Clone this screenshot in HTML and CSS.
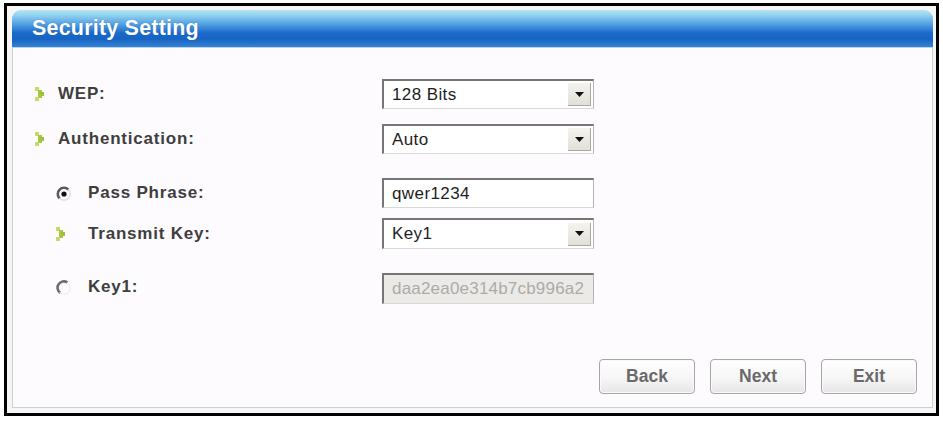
FILE: index.html
```html
<!DOCTYPE html>
<html>
<head>
<meta charset="utf-8">
<link rel="stylesheet" href="styles.css">
</head>
<body>
<div class="frame">
  <div class="panel">
    <div class="header">Security Setting</div>
    <div class="form">
      <div class="row r1">
        <div class="label">
          <span class="icon"><svg width="10" height="14" viewBox="0 0 10 14"><rect x="0" y="0" width="4" height="4" fill="#c4dc64"/><rect x="3" y="3" width="4" height="4" fill="#a6c840"/><rect x="5" y="5" width="4" height="4" fill="#9cc038"/><rect x="3" y="7" width="4" height="4" fill="#a6c840"/><rect x="0" y="10" width="4" height="4" fill="#c4dc64"/></svg></span>
          <span class="text">WEP:</span>
        </div>
        <div class="control select"><span class="value">128 Bits</span><span class="drop"><svg width="9" height="5" viewBox="0 0 9 5"><path d="M0 0H9L4.5 5Z" fill="#111"/></svg></span></div>
      </div>
      <div class="row r2">
        <div class="label">
          <span class="icon"><svg width="10" height="14" viewBox="0 0 10 14"><rect x="0" y="0" width="4" height="4" fill="#c4dc64"/><rect x="3" y="3" width="4" height="4" fill="#a6c840"/><rect x="5" y="5" width="4" height="4" fill="#9cc038"/><rect x="3" y="7" width="4" height="4" fill="#a6c840"/><rect x="0" y="10" width="4" height="4" fill="#c4dc64"/></svg></span>
          <span class="text">Authentication:</span>
        </div>
        <div class="control select"><span class="value">Auto</span><span class="drop"><svg width="9" height="5" viewBox="0 0 9 5"><path d="M0 0H9L4.5 5Z" fill="#111"/></svg></span></div>
      </div>
      <div class="row r3 sub">
        <div class="label">
          <span class="icon"><svg width="15" height="15" viewBox="0 0 15 15"><path d="M3.6 12.4A6 6 0 0 1 12.4 3.6" fill="none" stroke="#5a5a5a" stroke-width="2.6"/><path d="M12.4 3.6A6 6 0 0 1 3.6 12.4" fill="none" stroke="#e2e2e2" stroke-width="1.5"/><circle cx="8" cy="8" r="2.6" fill="#111"/></svg></span>
          <span class="text">Pass Phrase:</span>
        </div>
        <div class="control input"><span class="value">qwer1234</span></div>
      </div>
      <div class="row r4 sub">
        <div class="label">
          <span class="icon"><svg width="10" height="14" viewBox="0 0 10 14"><rect x="0" y="0" width="4" height="4" fill="#c4dc64"/><rect x="3" y="3" width="4" height="4" fill="#a6c840"/><rect x="5" y="5" width="4" height="4" fill="#9cc038"/><rect x="3" y="7" width="4" height="4" fill="#a6c840"/><rect x="0" y="10" width="4" height="4" fill="#c4dc64"/></svg></span>
          <span class="text">Transmit Key:</span>
        </div>
        <div class="control select"><span class="value">Key1</span><span class="drop"><svg width="9" height="5" viewBox="0 0 9 5"><path d="M0 0H9L4.5 5Z" fill="#111"/></svg></span></div>
      </div>
      <div class="row r5 sub">
        <div class="label">
          <span class="icon"><svg width="15" height="15" viewBox="0 0 15 15"><path d="M4.4 13A6 6 0 0 1 11.4 2.4" fill="none" stroke="#6e6e6e" stroke-width="2.6"/><path d="M12.4 3.6A6 6 0 0 1 3.6 12.4" fill="none" stroke="#ececec" stroke-width="1.2"/></svg></span>
          <span class="text">Key1:</span>
        </div>
        <div class="control input disabled"><span class="value">daa2ea0e314b7cb996a2</span></div>
      </div>
    </div>
    <div class="buttons">
      <div class="btn">Back</div>
      <div class="btn">Next</div>
      <div class="btn">Exit</div>
    </div>
  </div>
</div>
</body>
</html>
```
FILE: styles.css
```css
html, body {
  margin: 0;
  padding: 0;
  background: #ffffff;
}
body {
  font-family: "Liberation Sans", Arial, sans-serif;
}
.frame {
  margin: 3px 0 0 4px;
  width: 935px;
  height: 413px;
  box-sizing: border-box;
  border: 3px solid #000;
  padding: 4px 3px 5px 5px;
  background: #f7f6f7;
}
.panel {
  width: 921px;
  height: 398px;
  box-sizing: border-box;
  border: 1px solid #cfcfd2;
  border-top: none;
  border-radius: 9px 9px 0 0;
  background: #fdfbfd;
  display: flex;
  flex-direction: column;
}
.header {
  height: 37px;
  border-radius: 9px 9px 0 0;
  background: linear-gradient(to bottom, #b4e4f6 0%, #93d2f0 14%, #4c9de0 40%, #1b6acb 62%, #1663c3 78%, #3583d3 100%);
  border-bottom: 1px solid #b9d4ee;
  color: #fff;
  font-weight: bold;
  font-size: 21.5px;
  letter-spacing: 0.2px;
  line-height: 37px;
  padding-left: 20px;
  margin: 0 -1px;
  text-shadow: 0 0 1px rgba(20, 60, 130, 0.5);
}
.form {
  padding-top: 31px;
  display: flex;
  flex-direction: column;
}
.row {
  display: flex;
  align-items: center;
  height: 30px;
}
.r2 { margin-top: 15px; }
.r3 { margin-top: 24px; }
.r4 { margin-top: 10px; height: 31px; }
.r5 { margin-top: 24px; height: 31px; }
.label {
  width: 369px;
  box-sizing: border-box;
  padding-left: 22px;
  display: flex;
  align-items: center;
  color: #3e3e3e;
  font-weight: bold;
  font-size: 17px;
  letter-spacing: 0.8px;
}
.label .icon {
  width: 23px;
  display: flex;
  align-items: center;
}
.sub .label { padding-left: 43px; }
.sub .label .icon { width: 32px; }
.r5 .label { margin-top: -3px; }
.control {
  width: 212px;
  height: 100%;
  box-sizing: border-box;
  border-style: solid;
  border-width: 2px 1px 1px 2px;
  border-color: #767676 #b4b4b4 #d8d8d8 #767676;
  background: #fff;
  display: flex;
  align-items: center;
  font-size: 17px;
  letter-spacing: 0.4px;
  color: #1e1e1e;
  overflow: hidden;
  white-space: nowrap;
}
.control .value {
  flex: 1;
  padding-left: 8px;
  overflow: hidden;
}
.select .drop {
  width: 22px;
  height: 22px;
  margin-right: 2px;
  background: linear-gradient(to bottom, #f4f3ee, #e2e0d8);
  border-right: 1px solid #a8a8a8;
  border-bottom: 1px solid #a8a8a8;
  display: flex;
  align-items: center;
  justify-content: center;
}
.disabled {
  background: #ebeae6;
  color: #ababab;
}
.disabled .value {
  letter-spacing: 0.2px;
}
.buttons {
  margin-top: 55px;
  display: flex;
  justify-content: flex-end;
  gap: 15px;
  padding-right: 15px;
}
.btn {
  width: 96px;
  height: 35px;
  box-sizing: border-box;
  border: 1px solid #a6a6a6;
  border-radius: 4px;
  background: linear-gradient(to bottom, #ffffff 0%, #f6f6f6 55%, #e6e6e6 100%);
  box-shadow: inset 0 0 0 1px #fafafa;
  color: #6a6a6a;
  font-weight: bold;
  font-size: 17.5px;
  display: flex;
  align-items: center;
  justify-content: center;
}
```
